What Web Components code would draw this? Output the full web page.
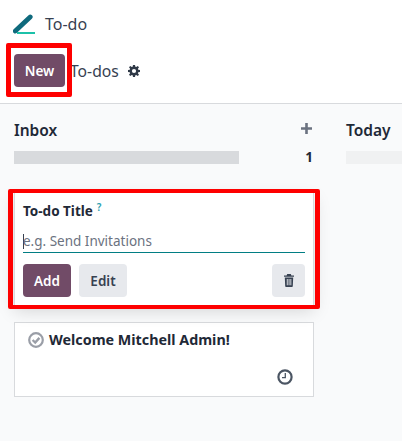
<!DOCTYPE html>
<html>
<head>
<meta charset="utf-8">
<style>
  html, body { margin: 0; height: 100%; }
  body { background: #f9fafb; font-family: "Noto Sans", "Open Sans", sans-serif; color: #374151; overflow: hidden; }
</style>
</head>
<body>
<todo-app></todo-app>
<script>
(function() {
  const define = (name, html) => {
    const template = document.createElement('template');
    template.innerHTML = html;
    customElements.define(name, class extends HTMLElement {
      constructor() {
        super();
        this.attachShadow({ mode: 'open' });
        this.shadowRoot.appendChild(template.content.cloneNode(true));
      }
    });
  };

  define('app-button', `
  <style>
    :host {
      display: inline-flex;
      align-items: center;
      justify-content: center;
      box-sizing: border-box;
      height: 33px;
      padding: 0 12px;
      border-radius: 4px;
      background: #e7e9ed;
      color: #374151;
      font-size: 13.5px;
      font-weight: 600;
    }
    :host([primary]) {
      background: #714b67;
      color: #fff;
    }
  </style>
  <slot></slot>
  `);

  define('red-frame', `
  <style>
    :host {
      display: block;
      position: relative;
    }
    #frame {
      position: absolute;
      inset: var(--frame-inset, -5px);
      border: solid #fe0000;
      border-width: var(--frame-width, 5px);
      border-radius: 2px;
      pointer-events: none;
    }
  </style>
  <slot></slot>
  <div id="frame"></div>
  `);

  define('app-header', `
  <style>
    :host {
      display: block;
      height: 104px;
      box-sizing: border-box;
      background: #fff;
      border-bottom: 1px solid #d8dadd;
    }
    #brand {
      display: flex;
      align-items: center;
      gap: 10px;
      height: 46px;
      padding: 2px 0 0 13px;
      box-sizing: border-box;
      font-size: 16px;
    }
    #controls {
      display: flex;
      align-items: center;
      height: 33px;
      margin: 8px 0 0 14px;
    }
    #controls red-frame {
      --frame-inset: -11px -7px -10px -8px;
    }
    #title {
      margin-left: 5px;
      font-size: 15.7px;
    }
    svg { display: block; }
    #gear { margin-left: 9px; }
  </style>
  <div id="brand">
    <svg width="22" height="20" viewBox="0 0 22 20">
      <path d="M2.300 17 17.200 3" stroke="#0f6a7d" stroke-width="4.800" stroke-linecap="round" fill="none"/>
      <path d="M4 19 H22" stroke="#1cc1a9" stroke-width="2" fill="none"/>
    </svg>
    <span>To-do</span>
  </div>
  <div id="controls">
    <red-frame><app-button primary style="width:51px">New</app-button></red-frame>
    <span id="title">To-dos</span>
    <svg id="gear" width="12" height="12" viewBox="0 0 24 24">
      <path fill="#2f3947" fill-rule="evenodd" d="M10 0h4l.7 3.500 1.800.7L19.500 2 22 4.500l-2.200 3 .7 1.800 3.500.7v4l-3.500.7-.7 1.800 2.200 3L19.500 22l-3-2.200-1.800.7L14 24h-4l-.7-3.500-1.800-.7-3 2.200L2 19.500l2.200-3-.7-1.800L0 14v-4l3.500-.7.7-1.800-2.200-3L4.500 2l3 2.200 1.800-.7zM12 7.800a4.200 4.200 0 1 0 0 8.400 4.200 4.200 0 0 0 0-8.400z"/>
    </svg>
  </div>
  `);

  define('kanban-column', `
  <style>
    :host {
      display: block;
      flex: none;
      width: 300px;
    }
    #head {
      display: flex;
      justify-content: space-between;
      align-items: center;
      height: 24px;
      padding-right: 1px;
      color: #1f2937;
      font-size: 15.5px;
      font-weight: 600;
    }
    #bar {
      display: flex;
      align-items: center;
      justify-content: space-between;
      height: 13px;
      margin-top: 9px;
      color: #1f2937;
      font-size: 13.5px;
      font-weight: 700;
    }
    #track {
      width: 225px;
      height: 13px;
      background: var(--track, #d8dadd);
    }
    #count { padding-right: 1px; margin-top: -1px; }
  </style>
  <div id="head"><span id="name"></span><slot name="action"></slot></div>
  <div id="bar"><div id="track"></div><span id="count"></span></div>
  <slot></slot>
  `);

  define('quick-create', `
  <style>
    :host {
      display: block;
      box-sizing: border-box;
      height: 112px;
      padding: 9px 9px 0;
      background: #fff;
      border: solid #d8dadd;
      border-width: 0 1px;
      box-shadow: 0 6px 16px rgba(0,0,0,.15);
    }
    label {
      display: block;
      height: 20px;
      margin-left: -1px;
      color: #1f2937;
      font-size: 13.5px;
      font-weight: 700;
      line-height: 18px;
    }
    sup {
      margin-left: 4px;
      color: #2b9fb0;
      font-size: 10px;
      font-weight: 600;
      line-height: 0;
    }
    #input {
      box-sizing: border-box;
      height: 31px;
      margin: 0 -1px;
      padding-top: 10px;
      border-bottom: 1px solid #017e84;
      color: #6b7280;
      font-size: 13.5px;
      line-height: 18px;
      white-space: nowrap;
    }
    #input::before {
      content: "";
      display: inline-block;
      width: 1px;
      height: 15px;
      background: #374151;
      vertical-align: -3px;
      margin-right: -1px;
    }
    #actions {
      display: flex;
      gap: 8px;
      margin: 11px -1px 0;
    }
    #trash {
      width: 33px;
      margin-left: auto;
      padding: 0;
    }
  </style>
  <label>To-do Title<sup>?</sup></label>
  <div id="input">e.g. Send Invitations</div>
  <div id="actions">
    <app-button primary style="width:48px">Add</app-button>
    <app-button style="width:48px">Edit</app-button>
    <app-button id="trash">
      <svg width="10" height="13" viewBox="0 0 10 13">
        <path fill="#374151" fill-rule="evenodd" d="M3.200 0h3.600l.6 1.400H10v1.300H0V1.400h2.600zM.8 3.400h8.400l-.4 8.500c0 .6-.5 1.100-1.100 1.100H2.300c-.6 0-1.100-.5-1.100-1.100zM2.800 5v6.300h.9V5zm1.800 0v6.300h.9V5zm1.800 0v6.300h.9V5z"/>
      </svg>
    </app-button>
  </div>
  `);

  define('todo-card', `
  <style>
    :host {
      display: block;
      box-sizing: border-box;
      height: 75px;
      padding: 8px 13px;
      background: #fff;
      border: 1px solid #d8dadd;
    }
    #title {
      display: flex;
      align-items: center;
      gap: 5px;
      color: #1f2937;
      font-size: 14.3px;
      font-weight: 700;
      line-height: 18px;
    }
    #bottom {
      display: flex;
      justify-content: flex-end;
      margin: 20px 7px 0 0;
    }
    svg { display: block; flex: none; }
  </style>
  <div id="title">
    <svg width="16" height="16" viewBox="0 0 16 16">
      <circle cx="8" cy="8" r="6.800" fill="none" stroke="#9a9ea7" stroke-width="2.200"/>
      <path d="M4.600 8 7.200 10.500 11.400 5.900" fill="none" stroke="#9a9ea7" stroke-width="2.400"/>
    </svg>
    <slot></slot>
  </div>
  <div id="bottom">
    <svg width="16" height="16" viewBox="0 0 16 16">
      <circle cx="8" cy="8" r="6.600" fill="none" stroke="#4b5563" stroke-width="2.200"/>
      <path d="M8.300 4v4.600H5" fill="none" stroke="#4b5563" stroke-width="1.300"/>
    </svg>
  </div>
  `);

  define('kanban-board', `
  <style>
    :host {
      display: flex;
      gap: 32px;
      padding: 14px 0 0 14px;
      overflow: hidden;
    }
    #stack {
      display: flex;
      flex-direction: column;
      gap: 17px;
      margin-top: 29px;
    }
    #stack red-frame {
      --frame-inset: -4px -6px;
      --frame-width: 4px 5px;
    }
    #plus { display: block; margin: -3px 1px 0 0; }
  </style>
  <kanban-column data-name="Inbox" data-count="1">
    <svg id="plus" slot="action" width="11" height="11" viewBox="0 0 11 11">
      <path d="M5.500 0v11M0 5.500h11" stroke="#6b7280" stroke-width="2.600"/>
    </svg>
    <div id="stack">
      <red-frame><quick-create></quick-create></red-frame>
      <todo-card>Welcome Mitchell Admin!</todo-card>
    </div>
  </kanban-column>
  <kanban-column data-name="Today" style="--track:#f0f1f2"></kanban-column>
  `);

  define('todo-app', `
  <style>
    :host { display: block; }
  </style>
  <app-header></app-header>
  <kanban-board></kanban-board>
  `);

  // columns read their title and count from data attributes
  const board = document.querySelector('todo-app').shadowRoot.querySelector('kanban-board');
  board.shadowRoot.querySelectorAll('kanban-column').forEach(col => {
    col.shadowRoot.getElementById('name').textContent = col.dataset.name;
    col.shadowRoot.getElementById('count').textContent = col.dataset.count || '';
  });
})();
</script>
</body>
</html>
